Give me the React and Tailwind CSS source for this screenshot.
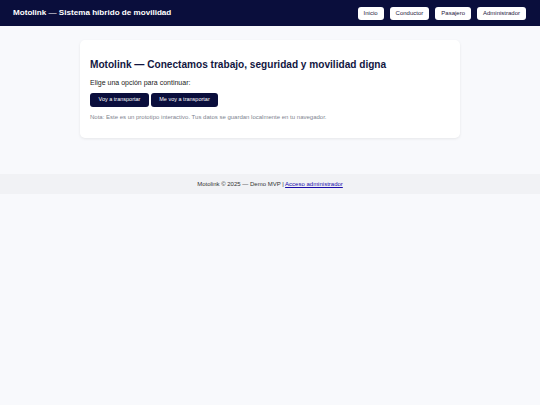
export default function App() {
  const links = ['Inicio', 'Conductor', 'Pasajero', 'Administrador'];

  return (
    <div className="min-h-[405px] bg-[#f8f9fc] antialiased font-['Liberation_Sans',Arial,sans-serif]">
      <header className="h-[26px] bg-[#0a0e3c] flex items-center justify-between pl-[13px] pr-[14px]">
        <h1 className="text-white font-bold text-[8.1px] leading-none">Motolink — Sistema híbrido de movilidad</h1>
        <nav className="flex gap-[6px]">
          {links.map((l) => (
            <button
              key={l}
              className="h-[13px] px-[6px] bg-white rounded-[3px] text-[6px] text-[#1e2140] leading-none"
            >
              {l}
            </button>
          ))}
        </nav>
      </header>

      <main className="pt-[14px] pb-[36px]">
        <div className="mx-auto w-[380px] bg-white rounded-[5px] shadow-[0_1px_3px_rgba(0,0,0,0.08)] px-[10px] pt-[20px] pb-[18px]">
          <h2 className="text-[10.1px] font-bold text-[#12163f] leading-none">
            Motolink — Conectamos trabajo, seguridad y movilidad digna
          </h2>
          <p className="mt-[9px] text-[7px] text-[#222] leading-none">Elige una opción para continuar:</p>
          <div className="mt-[7px] flex gap-[2px]">
            <button className="h-[14px] w-[59px] bg-[#0a0e3c] text-white rounded-[3px] text-[5.5px] leading-none">
              Voy a transportar
            </button>
            <button className="h-[14px] w-[67px] bg-[#0a0e3c] text-white rounded-[3px] text-[5.5px] leading-none">
              Me voy a transportar
            </button>
          </div>
          <p className="mt-[7px] text-[6px] text-[#80858f] leading-none">
            Nota: Este es un prototipo interactivo. Tus datos se guardan localmente en tu navegador.
          </p>
        </div>
      </main>

      <footer className="h-[20px] bg-[#f1f2f5] flex items-center justify-center text-[6px] text-[#333] leading-none">
        <span>
          Motolink © 2025 — Demo MVP |{' '}
          <a href="#" className="text-[#1a0dab] underline">Acceso administrador</a>
        </span>
      </footer>
    </div>
  );
}
